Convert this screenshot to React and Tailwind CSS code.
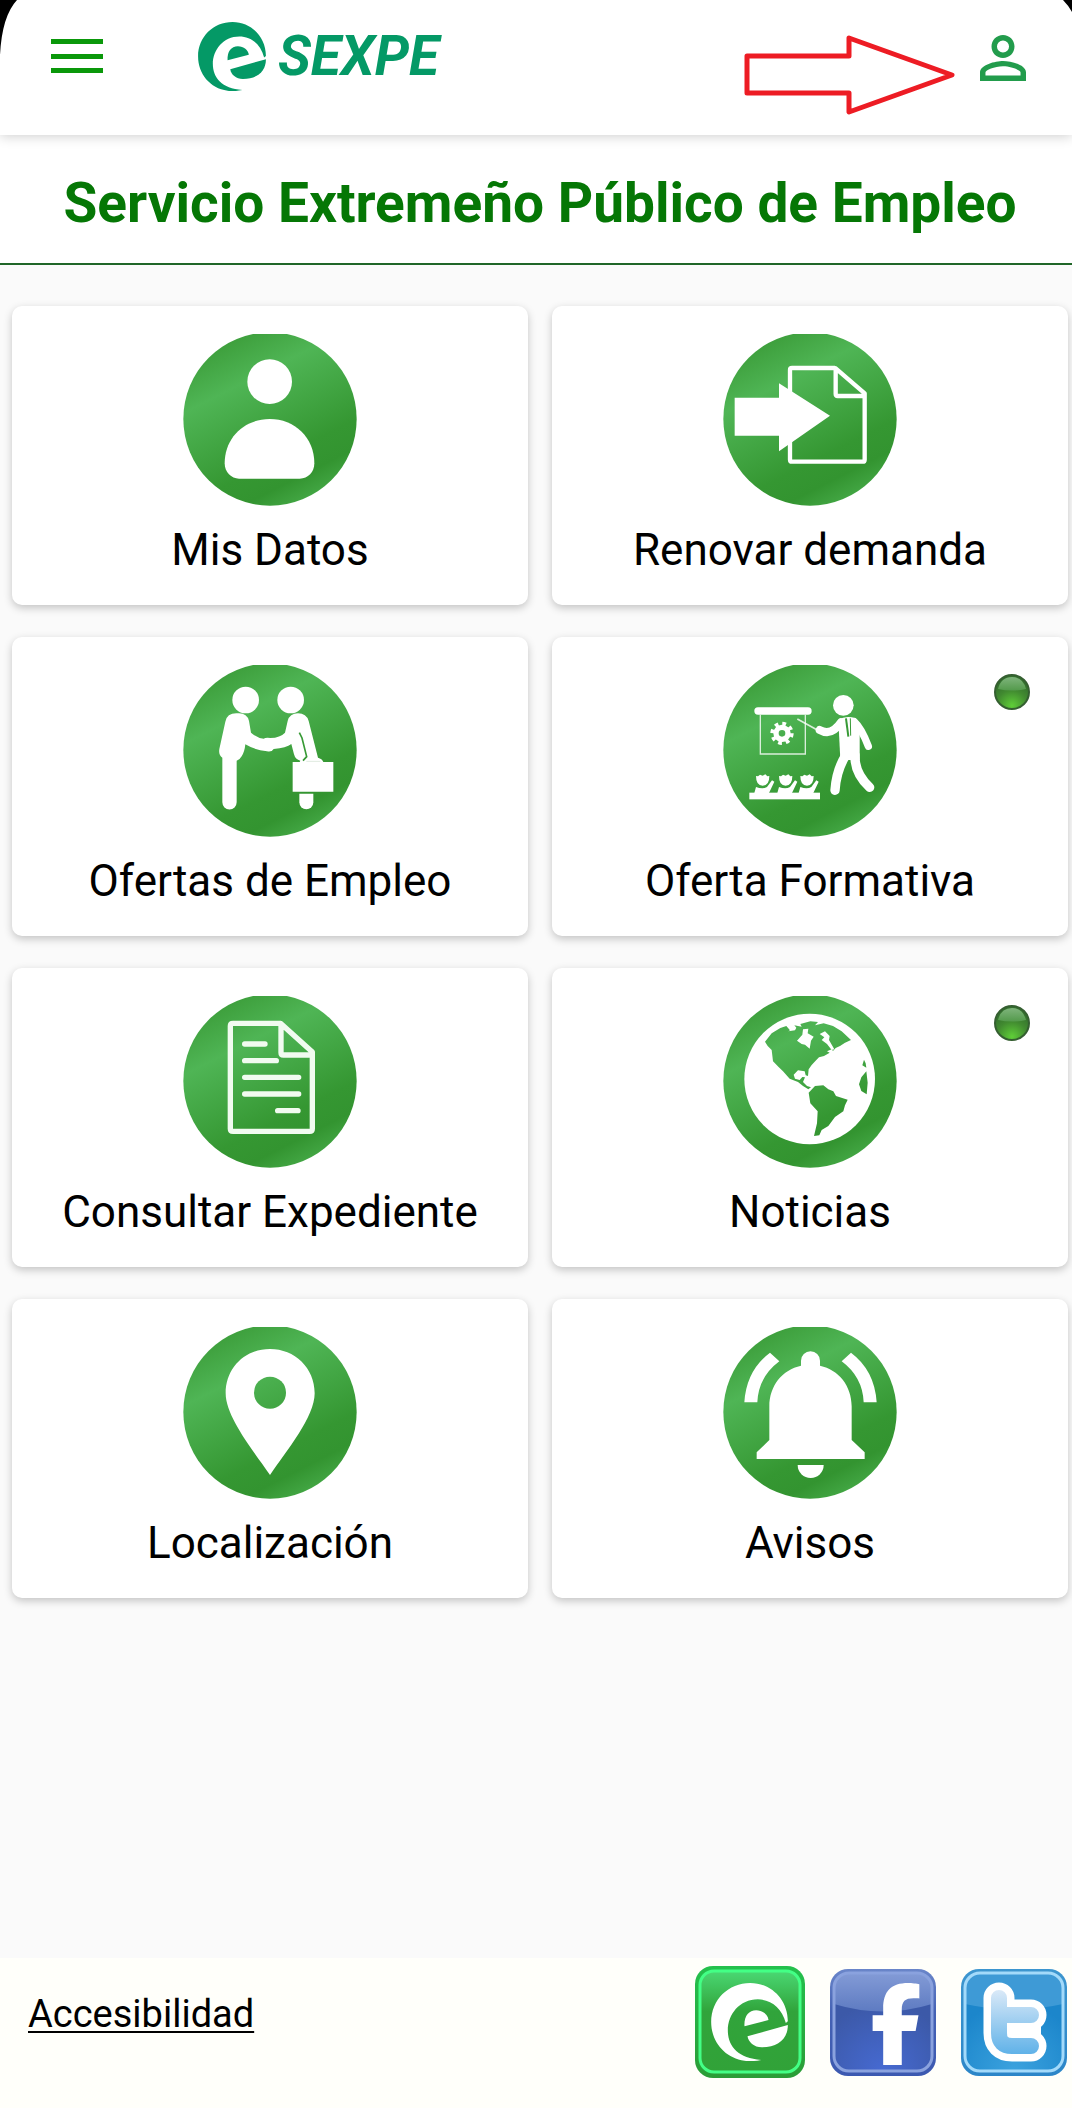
import React from "react";
import { FaFacebookF } from "react-icons/fa6";

// every round icon is drawn in a 522 x 516 box, the disc is cut flat at the top
const RoundIcon = ({ id, children }) => (
  <svg viewBox="0 0 522 516" className="w-[174px] h-[172px]" aria-hidden="true">
    <defs>
      <linearGradient
        id={id}
        gradientUnits="userSpaceOnUse"
        x1="0"
        y1="0"
        x2="291"
        y2="573"
      >
        <stop offset="0.05" stopColor="#379733" />
        <stop offset="0.33" stopColor="#4fb555" />
        <stop offset="0.72" stopColor="#359732" />
        <stop offset="0.84" stopColor="#339430" />
        <stop offset="1" stopColor="#4aaf4d" />
      </linearGradient>
    </defs>
    <circle cx="261" cy="255" r="260" fill={`url(#${id})`} />
    {children}
  </svg>
);

const PersonIcon = () => (
  <RoundIcon id="disc-person">
    <g fill="#fff">
      <circle cx="260" cy="143" r="67" />
      <path d="M125 388C125 310 185 255 260 255S394 310 394 388C394 415 375 434 350 434H168C145 434 125 415 125 388Z" />
    </g>
  </RoundIcon>
);

const RenewIcon = () => (
  <RoundIcon id="disc-renew">
    <path
      d="M336 102H207q-6 0-6 6V377q0 6 6 6H419q6 0 6-6V178L338 103V180q0 6 6 6H425"
      fill="none"
      stroke="#fff"
      strokeWidth="13"
      strokeLinejoin="round"
    />
    <path d="M35 191H168V148L321 245L168 352V305H35Z" fill="#fff" />
  </RoundIcon>
);

const HandshakeIcon = () => (
  <RoundIcon id="disc-handshake">
    <g fill="#fff">
      <circle cx="188" cy="105" r="40" />
      <circle cx="323" cy="105" r="40" />
      <path d="M127 170Q132 145 160 145H168Q192 145 198 168L204 203Q225 220 242 221Q248 217 262 219Q292 218 306 203L314 168Q320 145 345 145Q370 145 377 168L405 278Q417 281 421 291H451V380H329V291H350L352 287Q337 284 333 268L325 237Q310 249 272 252Q266 262 252 259Q215 255 187 238Q185 260 176 274Q170 285 161 287V412A21 21 0 0 1 118 412V278Q106 270 109 252Z" />
      <path d="M349 386H391V412A21 21 0 0 1 349 412Z" />
    </g>
    <path
      d="M349 203L357 219L371 275L360 287"
      fill="none"
      stroke="#389a36"
      strokeWidth="5"
    />
    <path d="M370 289H412" stroke="#dfeadf" strokeWidth="3" />
  </RoundIcon>
);

const Pupil = ({ x }) => (
  <g transform={`translate(${x} 0)`} fill="#fff">
    <path d="M-20 333L-14 334L-8 329L0 332L8 328L14 334L20 333Q20 362 0 362Q-20 362-20 333Z" />
    <path d="M-25 384L-20 366Q0 374 13 366L28 346L35 350L19 384Z" />
  </g>
);

const TrainingIcon = () => (
  <RoundIcon id="disc-training">
    <rect x="94" y="127" width="172" height="22" rx="11" fill="#fff" />
    <g fill="none" stroke="#fff">
      <path d="M112 149V267H247V149" strokeWidth="4" opacity="0.8" />
      <circle cx="177" cy="205" r="18" strokeWidth="16" />
      <circle
        cx="177"
        cy="205"
        r="29"
        strokeWidth="12"
        strokeDasharray="11 11.78"
      />
      <path d="M223 162L283 195" strokeWidth="5" opacity="0.8" />
      <g strokeLinecap="round" strokeLinejoin="round">
        <path d="M290 195Q325 215 354 172" strokeWidth="24" />
        <path d="M394 170Q416 190 436 244" strokeWidth="22" />
        <path d="M369 270Q340 315 336 376" strokeWidth="28" />
        <path d="M396 270Q394 325 440 367" strokeWidth="28" />
      </g>
    </g>
    <g fill="#fff">
      <circle cx="361" cy="121" r="31" />
      <path d="M346 164Q370 150 398 160L410 205V285H352Z" />
      <rect x="79" y="383" width="212" height="20" />
    </g>
    <path d="M369 160L376 215" stroke="#389a36" strokeWidth="6" />
    <path d="M382 160L383 212" stroke="#389a36" strokeWidth="3" />
    <Pupil x={119} />
    <Pupil x={188} />
    <Pupil x={252} />
  </RoundIcon>
);

const DocumentIcon = () => (
  <RoundIcon id="disc-document">
    <g fill="none" stroke="#f1fbf0" strokeWidth="16">
      <path
        d="M294 82H150q-8 0-8 8V398q0 8 8 8H380q8 0 8-8V168L294 83V170q0 7 7 7H388"
        strokeLinejoin="round"
      />
      <path
        d="M185 144H246M185 194H280M185 244H347M185 294H347M284 344H345"
        strokeLinecap="round"
      />
    </g>
  </RoundIcon>
);

const GlobeIcon = () => (
  <RoundIcon id="disc-globe">
    <circle cx="260" cy="249" r="196" fill="#fff" />
    <g fill="url(#disc-globe)">
      <path d="M126 137L146 112L172 96L190 90L201 103L196 106L216 103L220 95L214 88L236 92L232 84L262 76L285 78L276 88L302 82L330 90L356 106L384 132L366 140L351 150L338 156L330 165L326 160L312 166L320 170L303 180L288 184L280 192L266 207L257 220L255 240L248 238L245 226L225 223L212 236L216 248L230 252L238 243L246 244L240 258L252 270L264 274L256 280L240 270L225 258L200 248L180 226L166 212L150 196L146 162L134 150Z" />
      <path d="M276 270L301 268L316 280L331 286L339 300L374 311L366 328L361 346L336 363L316 390L296 402L289 418L273 420L282 382L284 346L262 322L257 290Z" />
      <path d="M430 226L415 244L408 265L415 285L431 295L434 260ZM423 191L418 208L430 215L428 202Z" />
    </g>
    <path
      d="M222 134L238 116L240 100L256 98L254 112L272 122L264 134L260 158L246 146L236 144ZM290 114L306 106L320 120L318 132L334 160L326 162L312 144L296 132L304 124Z"
      fill="#fff"
    />
  </RoundIcon>
);

const PinIcon = () => (
  <RoundIcon id="disc-pin">
    <path
      d="M261 66C335 66 395 122 395 199C395 270 312 370 261 444C210 370 128 270 128 199C128 122 187 66 261 66Z"
      fill="#fff"
    />
    <circle cx="261" cy="197" r="48" fill="url(#disc-pin)" />
  </RoundIcon>
);

const BellIcon = () => (
  <RoundIcon id="disc-bell">
    <g fill="#fff">
      <path d="M139 339V238C139 176 178 128 234 116V101A28 28 0 0 1 291 101V116C347 128 386 176 386 238V339L425 376V396H101V376Z" />
      <path d="M224 414H302A39 39 0 0 1 224 414Z" />
      <path d="M64 226Q70 130 141 77L169 103Q106 150 103 226Z" />
      <path d="M461 226Q455 130 384 77L356 103Q419 150 422 226Z" />
    </g>
  </RoundIcon>
);

const SexpeMark = ({ className, ...rest }) => (
  <svg
    viewBox="0 0 230 234"
    className={className}
    fill="currentColor"
    aria-hidden="true"
    {...rest}
  >
    <path d="M150 231C130 235 115 235 100 233C40 225 0 175 0 117C0 50 52 0 117 0C180 0 230 50 230 115L224 120C212 75 180 49 140 49C85 49 50 95 50 142C50 190 80 225 150 231Z" />
    <path d="M109 160L230 126C230 168 200 193 152 193C128 193 112 178 109 160Z" />
    <path d="M100 130C98 100 112 82 135 82C155 82 170 95 172 111Z" />
  </svg>
);

const NewDot = () => (
  <svg
    viewBox="0 0 36 36"
    className="absolute top-[37px] right-[38px] size-9"
    role="img"
    aria-label="Novedades"
  >
    <defs>
      <radialGradient id="dot-body" cx="0.5" cy="0.9" r="0.75">
        <stop offset="0" stopColor="#5fce38" />
        <stop offset="0.6" stopColor="#418a30" />
        <stop offset="1" stopColor="#33702d" />
      </radialGradient>
      <linearGradient id="dot-shine" x1="0" y1="0" x2="0" y2="1">
        <stop offset="0" stopColor="#7fb47c" />
        <stop offset="1" stopColor="#539a4b" />
      </linearGradient>
    </defs>
    <circle cx="18" cy="18" r="17" fill="url(#dot-body)" stroke="#355f31" strokeWidth="2" />
    <path d="M4 15Q7 3 18 3T32 15Q18 18 4 15Z" fill="url(#dot-shine)" />
  </svg>
);

const SexpeTile = () => (
  <svg viewBox="0 0 110 112" className="w-[110px] h-28 text-white" aria-hidden="true">
    <defs>
      <linearGradient id="sx-rim" x1="0" y1="0" x2="0" y2="1">
        <stop offset="0" stopColor="#24c14d" />
        <stop offset="1" stopColor="#2b9c36" />
      </linearGradient>
      <linearGradient id="sx-face" x1="0" y1="0" x2="0" y2="1">
        <stop offset="0" stopColor="#4ad873" />
        <stop offset="0.4" stopColor="#31a43b" />
        <stop offset="1" stopColor="#31a238" />
      </linearGradient>
    </defs>
    <rect width="110" height="112" rx="18" fill="url(#sx-rim)" />
    <rect
      x="5"
      y="5"
      width="100"
      height="101"
      rx="14"
      fill="url(#sx-face)"
      stroke="#43ff85"
      strokeWidth="3"
    />
    <SexpeMark x="16" y="17" width="77" height="78" />
  </svg>
);

const FacebookTile = () => (
  <svg viewBox="0 0 106 107" className="w-[106px] h-[107px] text-white" aria-hidden="true">
    <defs>
      <linearGradient id="fb-rim" x1="0" y1="0" x2="0" y2="1">
        <stop offset="0" stopColor="#6a86c9" />
        <stop offset="0.4" stopColor="#4562b4" />
        <stop offset="1" stopColor="#3c59b0" />
      </linearGradient>
      <radialGradient id="fb-face" cx="0.5" cy="1" r="0.7">
        <stop offset="0" stopColor="#466ad2" />
        <stop offset="1" stopColor="#3c59a8" />
      </radialGradient>
      <linearGradient id="fb-shine" x1="0" y1="0" x2="0" y2="1">
        <stop offset="0" stopColor="#839bd6" />
        <stop offset="1" stopColor="#5e7bc2" />
      </linearGradient>
    </defs>
    <rect width="106" height="107" rx="18" fill="url(#fb-rim)" />
    <rect x="4" y="4" width="98" height="98" rx="15" fill="url(#fb-face)" />
    <path d="M4 35V19Q4 4 19 4H87Q102 4 102 19V35Q53 50 4 35Z" fill="url(#fb-shine)" />
    <rect x="4" y="4" width="98" height="98" rx="15" fill="none" stroke="#8aa2de" strokeWidth="3" />
    <FaFacebookF x="25" y="14" size={82} />
  </svg>
);

const TwitterTile = () => (
  <svg viewBox="0 0 106 107" className="w-[106px] h-[107px]" aria-hidden="true">
    <defs>
      <linearGradient id="tw-rim" x1="0" y1="0" x2="0" y2="1">
        <stop offset="0" stopColor="#3d96cf" />
        <stop offset="1" stopColor="#2c86c8" />
      </linearGradient>
      <radialGradient id="tw-face" cx="0.5" cy="1" r="0.7">
        <stop offset="0" stopColor="#3ba2de" />
        <stop offset="1" stopColor="#1c86cb" />
      </radialGradient>
      <linearGradient id="tw-ink" gradientUnits="userSpaceOnUse" x1="0" y1="20" x2="0" y2="86">
        <stop offset="0" stopColor="#dceaf8" />
        <stop offset="1" stopColor="#5eb1e8" />
      </linearGradient>
    </defs>
    <rect width="106" height="107" rx="18" fill="url(#tw-rim)" />
    <rect x="4" y="4" width="98" height="98" rx="15" fill="url(#tw-face)" />
    <path d="M4 35V19Q4 4 19 4H87Q102 4 102 19V35Q53 46 4 35Z" fill="#3e9ad6" />
    <rect x="4" y="4" width="98" height="98" rx="15" fill="none" stroke="#a3dafa" strokeWidth="3" />
    <path d="M46 57H80V66H46Z" fill="#fff" />
    <g fill="none" strokeLinecap="round">
      <path d="M38 29V64Q38 77 51 77H70M38 46H70" stroke="#fff" strokeWidth="31" />
      <path d="M38 29V64Q38 77 51 77H70M38 46H70" stroke="url(#tw-ink)" strokeWidth="16" />
    </g>
  </svg>
);

const menuItems = [
  { label: "Mis Datos", icon: <PersonIcon /> },
  { label: "Renovar demanda", icon: <RenewIcon /> },
  { label: "Ofertas de Empleo", icon: <HandshakeIcon /> },
  { label: "Oferta Formativa", icon: <TrainingIcon />, isNew: true },
  { label: "Consultar Expediente", icon: <DocumentIcon /> },
  { label: "Noticias", icon: <GlobeIcon />, isNew: true },
  { label: "Localización", icon: <PinIcon /> },
  { label: "Avisos", icon: <BellIcon /> },
];

const Header = () => (
  <header className="relative z-10 flex items-start h-[135px] pl-[51px] pr-[46px] bg-white shadow-[0_1px_12px_rgba(0,0,0,0.2)]">
    <button type="button" aria-label="Menú" className="mt-[39px]">
      <svg viewBox="0 0 52 34" className="w-[52px] h-[34px]" fill="#0a980a">
        <path d="M0 0H52V5H0ZM0 15H52V20H0ZM0 29H52V34H0Z" />
      </svg>
    </button>
    <a href="#inicio" className="flex items-center gap-3 mt-[22px] ml-[95px] text-[#049966]">
      <SexpeMark className="w-[68px] h-[69px]" />
      <span className="font-bold italic text-[55px] leading-[69px]">SEXPE</span>
    </a>
    <svg
      viewBox="0 0 212 82"
      className="w-[212px] h-[82px] mt-[34px] ml-auto"
      aria-hidden="true"
    >
      <path
        d="M3 22H105V4L208 41L105 78V59H3Z"
        fill="none"
        stroke="#ed1c24"
        strokeWidth="5"
        strokeLinejoin="round"
      />
    </svg>
    <button type="button" aria-label="Mi cuenta" className="mt-[35px] ml-6">
      <svg viewBox="4 4 16 16" className="size-[46px]" fill="#229c4c">
        <path d="M12 5.9a2.1 2.1 0 110 4.2 2.1 2.1 0 010-4.2m0 9c2.97 0 6.1 1.46 6.1 2.1v1.1H5.9V17c0-.64 3.13-2.1 6.1-2.1M12 4C9.79 4 8 5.79 8 8s1.79 4 4 4 4-1.79 4-4-1.79-4-4-4zm0 9c-2.67 0-8 1.34-8 4v3h16v-3c0-2.66-5.33-4-8-4z" />
      </svg>
    </button>

    {/* rounded corners of the phone screen */}
    <svg viewBox="0 0 18 56" className="absolute top-0 left-0 w-[18px] h-14" aria-hidden="true">
      <path d="M0 0H17Q2 16 0 55Z" />
    </svg>
    <svg viewBox="0 0 9 12" className="absolute top-0 right-0 w-[9px] h-3" aria-hidden="true">
      <path d="M0 0H9V12Q5 5 0 0Z" />
    </svg>
  </header>
);

const MenuCard = ({ item }) => (
  <button
    type="button"
    className="relative flex flex-col items-center h-[299px] pt-7 rounded-[10px] bg-white shadow-[0_3px_8px_rgba(0,0,0,0.22)]"
  >
    {item.icon}
    <span className="mt-4 text-[44px] leading-[56px]">{item.label}</span>
    {item.isNew && <NewDot />}
  </button>
);

const App = () => {
  return (
    <div className="flex flex-col min-h-screen bg-[#fafafa] font-['Roboto',sans-serif] text-black">
      <Header />
      <h1 className="pt-9 pb-7 pl-3 pr-1 border-b-2 border-[#206628] bg-white text-center text-[55px] leading-16 font-bold text-[#057705]">
        Servicio Extremeño Público de Empleo
      </h1>

      <main className="flex-1 pt-[41px] pl-3 pr-1">
        <nav className="grid grid-cols-2 gap-x-6 gap-y-8">
          {menuItems.map((item) => (
            <MenuCard key={item.label} item={item} />
          ))}
        </nav>
      </main>

      <footer className="flex items-start justify-between h-[150px] pt-2 pl-7 pr-[5px] bg-[#fffffa]">
        <a
          href="#accesibilidad"
          className="mt-6 text-[38px] leading-12 underline decoration-2 underline-offset-4"
        >
          Accesibilidad
        </a>
        <div className="flex items-center gap-[25px]">
          <a href="#sexpe" aria-label="SEXPE">
            <SexpeTile />
          </a>
          <a href="#facebook" aria-label="Facebook">
            <FacebookTile />
          </a>
          <a href="#twitter" aria-label="Twitter">
            <TwitterTile />
          </a>
        </div>
      </footer>
    </div>
  );
};

export default App;
